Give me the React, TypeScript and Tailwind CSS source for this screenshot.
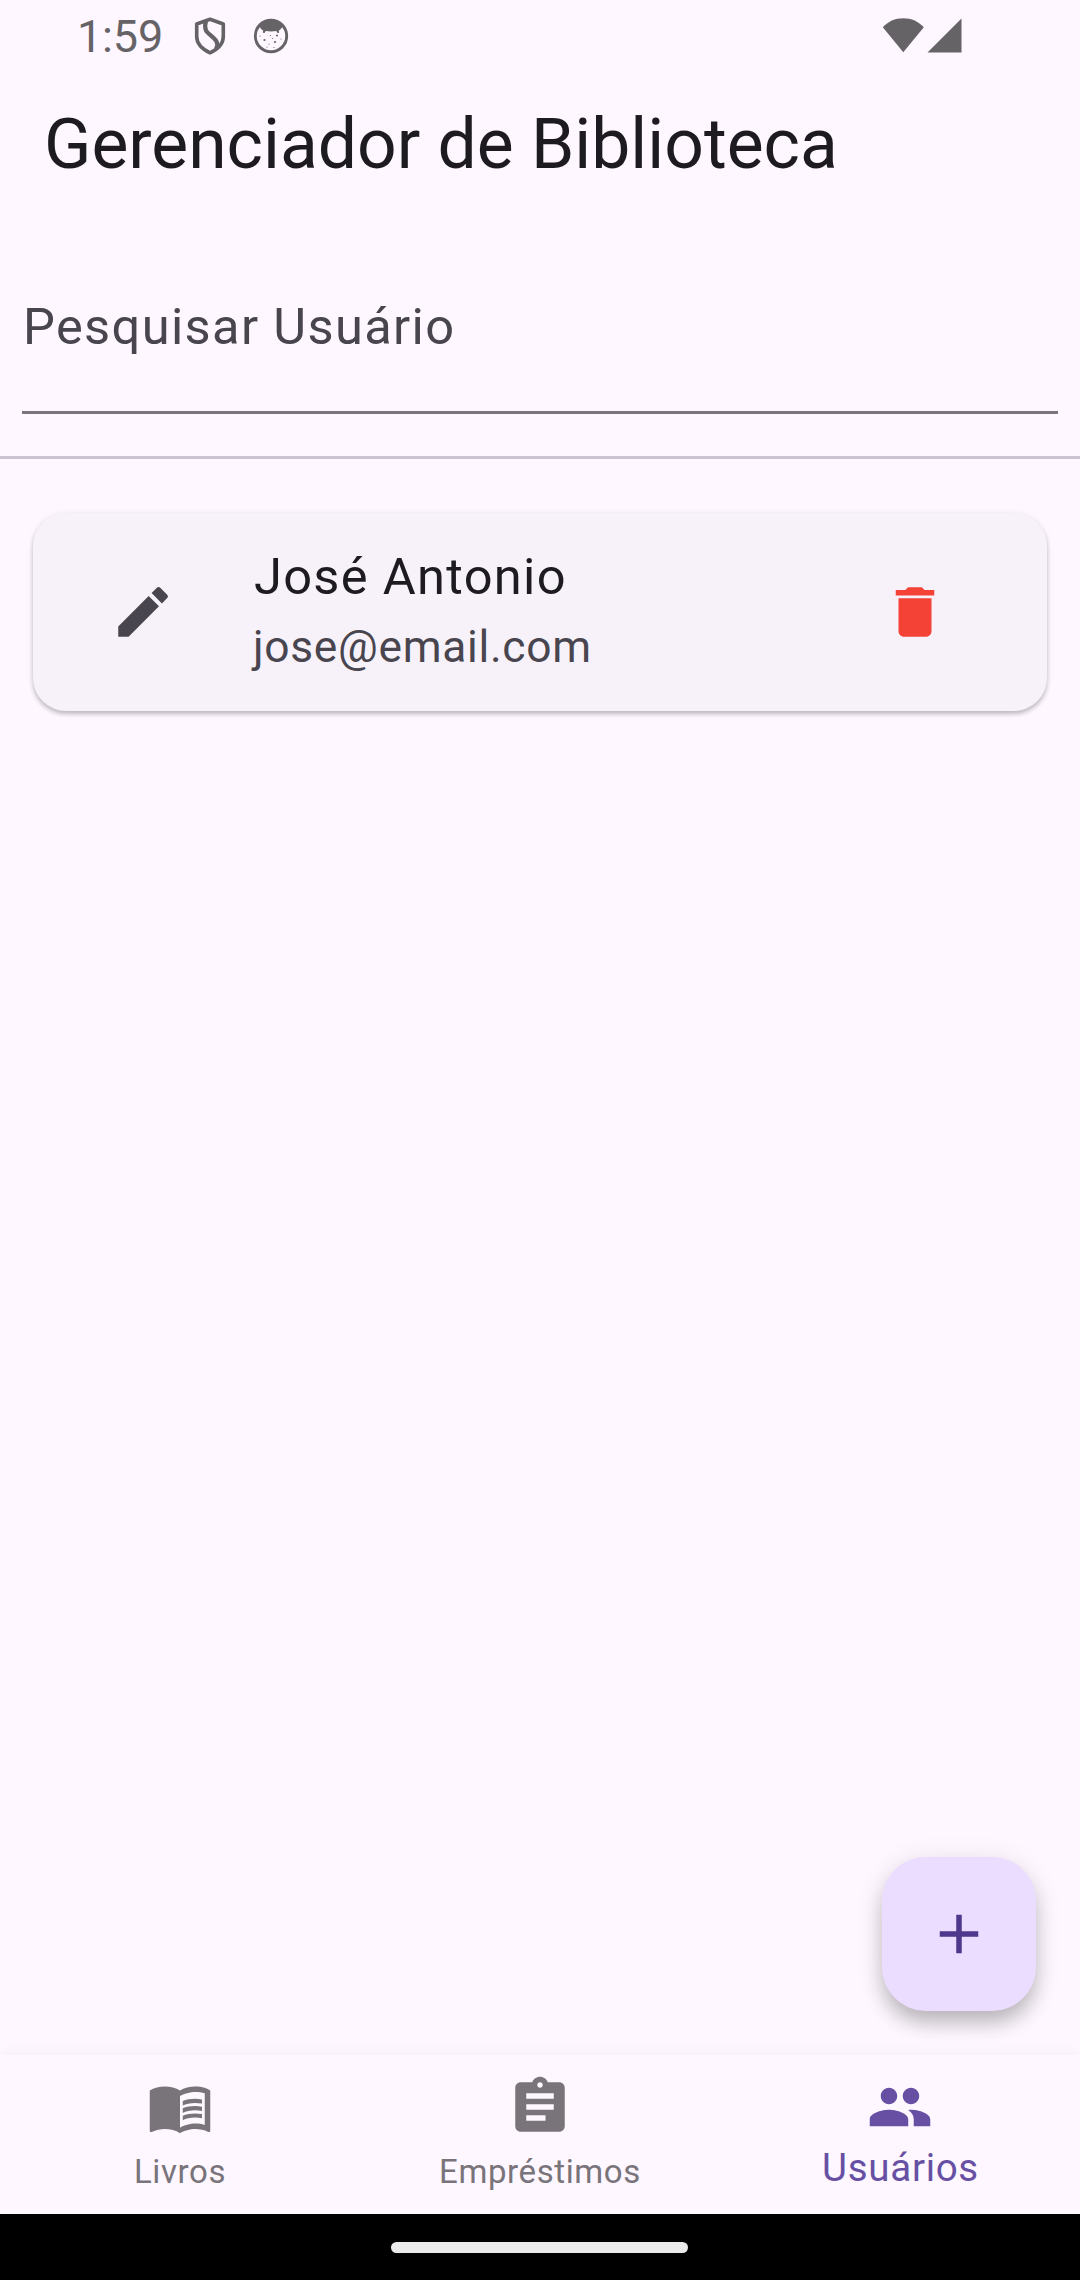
import React from "react";
import {
  MdMenuBook,
  MdAssignment,
  MdPeople,
  MdEdit,
  MdDelete,
  MdAdd,
} from "react-icons/md";

function ShieldIcon() {
  return (
    <svg className="-mt-[1px] ml-[31px] h-[38px] w-[32px]" viewBox="0 0 32 38" fill="none" stroke="#666367" strokeWidth="3.6" strokeLinejoin="round">
      <path d="M16 2.300 29.300 7v12.500c0 6.500-5 12.500-13.300 16.300C8 32 2.700 26 2.700 19.500V7Z" />
      <path d="M12 4C11 7 10.800 10.500 12 13.500 14 17 19.500 20 22.300 24 24 27 23.500 29.500 22 32" strokeWidth="4.200" />
    </svg>
  );
}

function FaceIcon() {
  return (
    <svg className="-mt-[1px] ml-[27px] h-[36px] w-[36px]" viewBox="0 0 36 36" fill="#666367">
      <circle cx="18" cy="18" r="15.700" fill="none" stroke="#666367" strokeWidth="2.900" />
      <path d="M6.500 8C9.500 4 13 2 18 2s8.500 2 11.500 6c-.6 2-2 3.600-3.700 4.400l.4 2.400-1.700.3-1.200-2.100c-3.400.5-7.200.5-10.600 0l-1.200 2.100-1.700-.3.400-2.400C8.500 11.600 7.100 10 6.500 8Z" />
      <circle cx="11.500" cy="22" r="1.100" />
      <circle cx="22" cy="24" r="1.100" />
      <circle cx="24" cy="17.500" r="1" />
      <circle cx="17.500" cy="17.500" r=".6" />
      <circle cx="7" cy="18" r=".6" />
      <circle cx="16" cy="26" r=".6" />
      <circle cx="19.500" cy="20.500" r=".6" />
      <circle cx="28" cy="21" r=".6" />
      <circle cx="14" cy="29" r=".6" />
      <circle cx="21" cy="29.500" r=".6" />
    </svg>
  );
}

function StatusBar() {
  return (
    <div className="flex h-[72px] shrink-0 items-center pl-[77px] pr-[118px] text-[#666367]">
      <span className="mt-[1px] w-[86px] text-[45px] leading-[72px] tracking-[-0.2px]">1:59</span>
      <ShieldIcon />
      <FaceIcon />
      <svg className="-mt-[1px] ml-auto h-[36px] w-[80px]" viewBox="0 0 80 36" fill="#666367">
        <path d="M.8 9.200C6 3.500 13 .2 21.300.2s15.200 3.300 20.500 9L21.300 34.300Z" />
        <path d="M79.500.5v34H45.500Z" />
      </svg>
    </div>
  );
}

const tabs = [
  { label: "Livros", Icon: MdMenuBook, active: false },
  { label: "Empréstimos", Icon: MdAssignment, active: false },
  { label: "Usuários", Icon: MdPeople, active: true },
];

export default function App() {
  return (
    <div className="flex h-[2280px] w-[1080px] flex-col overflow-hidden bg-[#fef7ff] font-['Roboto',sans-serif] text-[#1d1b20]">
      <StatusBar />
      <header className="flex h-[146px] shrink-0 items-start px-[44px]">
        <h1 className="text-[69.6px] leading-[144px]">Gerenciador de Biblioteca</h1>
      </header>
      <main className="relative flex grow flex-col">
        <div className="mx-[22px] mt-[22px] flex h-[174px] items-center border-b-[3px] border-[#7b757f] pl-px text-[50.6px] tracking-[1.350px] text-[#49454f]">
          <span className="mt-[3px]">Pesquisar Usuário</span>
        </div>
        <div className="mt-[42px] h-[3px] bg-[#cac4d0]" />
        <div className="mx-[33px] mt-[54px] flex h-[198px] items-center rounded-[33px] bg-[#f7f2fa] pl-[77px] pr-[99px] shadow-[0_3px_4px_rgba(0,0,0,0.22),0_1px_7px_rgba(0,0,0,0.07)]">
          <MdEdit className="size-[66px] text-[#49454f]" />
          <div className="-mt-[6px] ml-[78px] grow">
            <div className="text-[50.6px] leading-[76px] tracking-[1.300px]">José Antonio</div>
            <div className="-ml-px text-[44.300px] leading-[64px] tracking-[0.700px] text-[#49454f]">jose@email.com</div>
          </div>
          <MdDelete className="size-[66px] text-[#f44336]" />
        </div>
        <button className="absolute bottom-[44px] right-[44px] flex size-[154px] items-center justify-center rounded-[44px] bg-[#eaddff] text-[#4f378b] shadow-[0_14px_20px_-2px_rgba(0,0,0,0.22),0_4px_28px_rgba(0,0,0,0.1)]">
          <MdAdd className="-mt-[1px] size-[66px]" />
        </button>
      </main>
      <nav className="flex h-[159px] shrink-0 bg-[#fef7ff] shadow-[0_-2px_14px_rgba(0,0,0,0.035)]">
        {tabs.map(({ label, Icon, active }) => (
          <div key={label} className={active ? "flex flex-1 flex-col items-center pt-[19px] text-[#6750a4]" : "flex flex-1 flex-col items-center pt-[19px] text-[#79747a]"}>
            <Icon className="size-[66px]" />
            <span className={active ? "mt-[3px] pl-px text-[38.5px] leading-[50px] tracking-[0.700px]" : "mt-[8px] text-[33px] leading-[48px] tracking-[0.600px]"}>{label}</span>
          </div>
        ))}
      </nav>
      <div className="flex h-[66px] shrink-0 items-center justify-center bg-black pr-[2px]">
        <div className="h-[11px] w-[297px] rounded-full bg-[#ebebeb]" />
      </div>
    </div>
  );
}
